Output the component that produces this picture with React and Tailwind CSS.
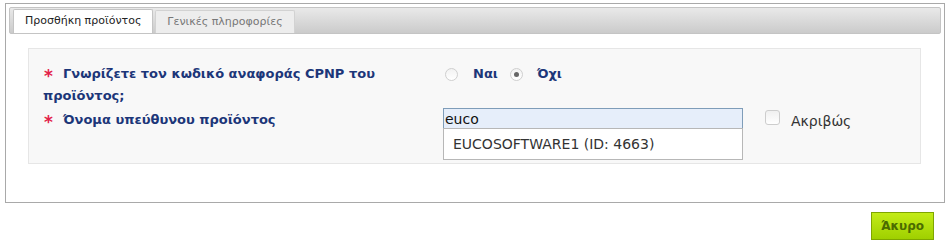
import { useState } from "react";

function Star() {
  return (
    <span className="inline-block w-[20px] text-[17px] leading-[12px] font-bold text-[#e3224a] align-[-4px] pl-[1px]">*</span>
  );
}

export default function App() {
  const [value, setValue] = useState("euco");
  const [known, setKnown] = useState("no");

  return (
    <div className="w-[952px] h-[252px] bg-white pt-[3px] pl-[5px] font-['DejaVu_Sans',Verdana,sans-serif]">
      {/* Panel */}
      <div className="w-[940px] h-[200px] border border-[#a9a9a9] p-[3px]">
        {/* Tabs bar */}
        <div className="h-[27px] border border-[#c4c4c4] rounded-[2px] bg-gradient-to-b from-[#e9e9e9] to-[#cbcbcb] flex items-end pl-[3px] gap-[2px]">
          <div className="h-[24px] px-[11px] bg-white border border-b-0 border-[#c4c4c4] rounded-t-[2px] flex items-center text-[11px] text-[#222]">
            Προσθήκη προϊόντος
          </div>
          <div className="h-[23px] px-[11px] bg-[#ededed] border border-b-0 border-[#d2d2d2] rounded-t-[2px] flex items-center text-[11px] text-[#777]">
            Γενικές πληροφορίες
          </div>
        </div>

        {/* Form box */}
        <div className="ml-[19px] mt-[14px] w-[893px] h-[116px] bg-[#f8f8f8] border border-[#e6e6e6] pl-[14px] pt-[14px]">
          {/* Row 1 */}
          <div className="flex">
            <div className="w-[400px] pr-[10px] text-[13px] leading-[22px] font-bold text-[#1c3679]">
              <Star />
              Γνωρίζετε τον κωδικό αναφοράς CPNP του προϊόντος;
            </div>
            <div className="flex items-center h-[22px] text-[13px] font-bold text-[#1c3679]">
              <button onClick={() => setKnown("yes")} className="ml-[2px] w-[13px] h-[13px] rounded-full border border-[#cfcfcf] bg-gradient-to-b from-[#f2f2f2] to-white flex items-center justify-center">
                {known === "yes" && <span className="w-[5px] h-[5px] rounded-full bg-[#666]" />}
              </button>
              <span className="ml-[15px]">Ναι</span>
              <button onClick={() => setKnown("no")} className="ml-[12px] w-[13px] h-[13px] rounded-full border border-[#cfcfcf] bg-gradient-to-b from-[#f2f2f2] to-white flex items-center justify-center">
                {known === "no" && <span className="w-[5px] h-[5px] rounded-full bg-[#666]" />}
              </button>
              <span className="ml-[14px]">Όχι</span>
            </div>
          </div>

          {/* Row 2 */}
          <div className="flex">
            <div className="w-[400px] text-[13px] leading-[22px] font-bold text-[#1c3679] pt-[2px]">
              <Star />
              Όνομα υπεύθυνου προϊόντος
            </div>
            <div className="relative">
              <input
                value={value}
                onChange={(e) => setValue(e.target.value)}
                className="w-[300px] h-[22px] border border-[#7f9db9] bg-[#e6eefa] px-[1px] text-[14px] text-[#111] outline-none font-['DejaVu_Sans',Verdana,sans-serif]"
              />
              <div className="absolute left-0 top-[21px] w-[300px] h-[32px] bg-white border border-[#b7b7b7] flex items-center pl-[9px] text-[14px] text-[#333]">
                EUCOSOFTWARE1 (ID: 4663)
              </div>
            </div>
            <label className="flex items-start ml-[22px] pt-[3px]">
              <span className="w-[15px] h-[15px] rounded-[3px] border border-[#cdcdcd] bg-gradient-to-b from-[#f0f0f0] to-white" />
              <span className="ml-[11px] text-[14px] text-[#333] leading-[20px] mt-[1px]">Ακριβώς</span>
            </label>
          </div>
        </div>
      </div>

      {/* Actions */}
      <div className="w-[929px] flex justify-end mt-[9px]">
        <button className="w-[63px] h-[28px] border border-[#7fa600] bg-gradient-to-b from-[#c3ec17] to-[#9fd000] text-[12px] font-bold text-[#4b6b00]">
          Άκυρο
        </button>
      </div>
    </div>
  );
}
